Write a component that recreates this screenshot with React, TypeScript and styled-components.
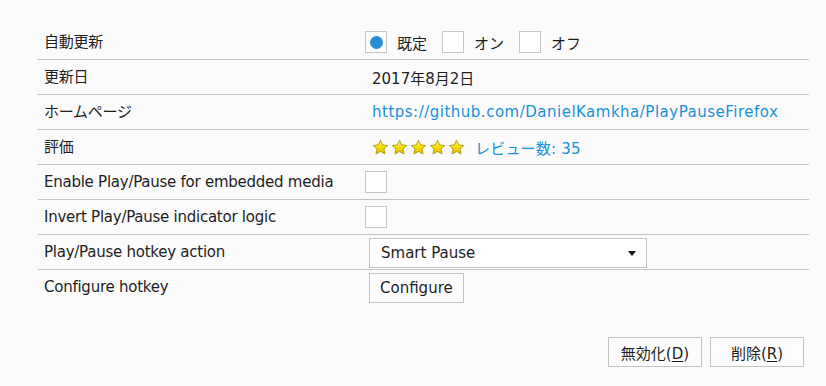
import React from 'react'
import styled, { createGlobalStyle } from 'styled-components'

const GlobalStyle = createGlobalStyle`
  html, body {
    margin: 0;
    padding: 0;
    background: #fbfbfb;
  }
  body {
    font-family: "DejaVu Sans", "Noto Sans CJK JP", sans-serif;
    font-size: 15px;
    color: #1e1e1e;
  }
`

const Page = styled.div`
  width: 826px;
  height: 386px;
  box-sizing: border-box;
  padding: 25px 17px 0 38px;
  display: flex;
  flex-direction: column;
`

const Table = styled.div`
  width: 771px;
  display: flex;
  flex-direction: column;
`

const Row = styled.div<{ $last?: boolean }>`
  display: grid;
  grid-template-columns: 327px 1fr;
  height: 35px;
  box-sizing: border-box;
  border-bottom: ${(p) => (p.$last ? 'none' : '1px solid #c3c3c3')};
`

const Label = styled.div`
  padding: 7px 0 0 6px;
  line-height: 20px;
  letter-spacing: -0.25px;
  white-space: nowrap;
`

const Value = styled.div<{ $pad?: number; $top?: boolean }>`
  display: flex;
  align-items: ${(p) => (p.$top ? 'flex-start' : 'center')};
  padding-left: ${(p) => p.$pad ?? 0}px;
  height: 34px;
  white-space: nowrap;
`

const Box = styled.span`
  width: 22px;
  height: 22px;
  box-sizing: border-box;
  border: 1px solid #c6c6c6;
  background: #fff;
  display: inline-flex;
  align-items: center;
  justify-content: center;
  flex: none;
`

const Dot = styled.span`
  width: 13px;
  height: 13px;
  border-radius: 50%;
  background: #268ed6;
`

const Option = styled.span`
  margin: 0 15px 0 10px;
`

const Link = styled.a<{ $wide?: boolean }>`
  color: #1791dc;
  text-decoration: none;
  letter-spacing: ${(p) => (p.$wide ? 0.5 : 0.2)}px;
`

const Stars = styled.span`
  display: inline-flex;
  gap: 2px;
  margin-right: 10px;
`

const Select = styled.div`
  width: 278px;
  height: 30px;
  box-sizing: border-box;
  border: 1px solid #c3c3c3;
  background: #fff;
  display: flex;
  align-items: center;
  justify-content: space-between;
  padding: 0 10px 0 11px;
  margin-top: 3px;
`

const Caret = styled.span`
  width: 0;
  height: 0;
  border-left: 4px solid transparent;
  border-right: 4px solid transparent;
  border-top: 5px solid #111;
`

const Button = styled.button<{ $top?: number }>`
  font-family: inherit;
  font-size: 15px;
  color: #1e1e1e;
  height: 30px;
  min-width: 94px;
  box-sizing: border-box;
  border: 1px solid #c3c3c3;
  background: #fdfdfd;
  padding: 0 10px;
  border-radius: 0;
  margin-top: ${(p) => p.$top ?? 0}px;
`

const Footer = styled.div`
  display: flex;
  justify-content: flex-end;
  gap: 8px;
  margin-top: 32px;
  padding-right: 5px;
`

const Key = styled.u`
  text-underline-offset: 2px;
`

const Star = () => (
  <svg width="17" height="17" viewBox="0 0 24 24">
    <defs>
      <linearGradient id="sg" x1="0" y1="0" x2="0" y2="1">
        <stop offset="0" stopColor="#fff38a" />
        <stop offset="0.5" stopColor="#f7dc00" />
        <stop offset="1" stopColor="#e0b800" />
      </linearGradient>
    </defs>
    <path
      d="M12 1.8l3.1 6.6 7.1.8-5.3 4.9 1.5 7.1L12 17.6l-6.4 3.6 1.5-7.1L1.8 9.2l7.1-.8z"
      fill="url(#sg)"
      stroke="#a89400"
      strokeWidth="1.2"
      strokeLinejoin="round"
    />
  </svg>
)

export default function App() {
  return (
    <Page>
      <GlobalStyle />
      <Table>
        <Row>
          <Label>自動更新</Label>
          <Value>
            <Box><Dot /></Box>
            <Option>既定</Option>
            <Box />
            <Option>オン</Option>
            <Box />
            <Option>オフ</Option>
          </Value>
        </Row>
        <Row>
          <Label>更新日</Label>
          <Value $pad={7}>2017年8月2日</Value>
        </Row>
        <Row>
          <Label>ホームページ</Label>
          <Value $pad={7}>
            <Link href="#" $wide>https://github.com/DanielKamkha/PlayPauseFirefox</Link>
          </Value>
        </Row>
        <Row>
          <Label>評価</Label>
          <Value $pad={7}>
            <Stars>
              {[0, 1, 2, 3, 4].map((i) => <Star key={i} />)}
            </Stars>
            <Link href="#">レビュー数: 35</Link>
          </Value>
        </Row>
        <Row>
          <Label>Enable Play/Pause for embedded media</Label>
          <Value><Box /></Value>
        </Row>
        <Row>
          <Label>Invert Play/Pause indicator logic</Label>
          <Value><Box /></Value>
        </Row>
        <Row>
          <Label>Play/Pause hotkey action</Label>
          <Value $pad={4} $top>
            <Select>
              <span>Smart Pause</span>
              <Caret />
            </Select>
          </Value>
        </Row>
        <Row $last>
          <Label>Configure hotkey</Label>
          <Value $pad={4} $top>
            <Button $top={3}>Configure</Button>
          </Value>
        </Row>
      </Table>
      <Footer>
        <Button>無効化(<Key>D</Key>)</Button>
        <Button>削除(<Key>R</Key>)</Button>
      </Footer>
    </Page>
  )
}
